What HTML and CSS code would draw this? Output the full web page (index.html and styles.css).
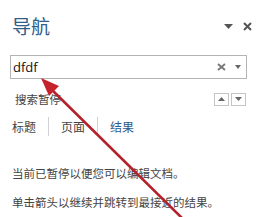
FILE: index.html
```html
<!DOCTYPE html>
<html lang="zh-CN">
<head>
<meta charset="utf-8">
<title>导航</title>
<link rel="stylesheet" href="styles.css">
</head>
<body>
<div class="pane">
  <div class="header">
    <div class="title">导航</div>
    <div class="header-icons">
      <svg class="hdr-drop" width="9" height="5" viewBox="0 0 9 5"><path d="M0 0H9L4.5 5Z" fill="#555"/></svg>
      <svg class="hdr-close" width="9" height="9" viewBox="0 0 9 9"><path d="M1 1L8 8M8 1L1 8" stroke="#555" stroke-width="2"/></svg>
    </div>
  </div>
  <div class="search">
    <span class="query">dfdf</span>
    <svg class="clear" width="9" height="8" viewBox="0 0 9 8"><path d="M1 1L8 7M8 1L1 7" stroke="#777" stroke-width="1.8"/></svg>
    <svg class="drop" width="6" height="4" viewBox="0 0 6 4"><path d="M0 0H6L3 4Z" fill="#666"/></svg>
  </div>
  <div class="status">
    <span class="status-text">搜索暂停</span>
    <div class="navbtns">
      <span class="navbtn"><svg width="7" height="4" viewBox="0 0 7 4"><path d="M0 4H7L3.5 0Z" fill="#666"/></svg></span>
      <span class="navbtn"><svg width="7" height="4" viewBox="0 0 7 4"><path d="M0 0H7L3.5 4Z" fill="#666"/></svg></span>
    </div>
  </div>
  <div class="tabs">
    <span class="tab">标题</span>
    <span class="sep"></span>
    <span class="tab">页面</span>
    <span class="sep"></span>
    <span class="tab active">结果</span>
  </div>
  <div class="msgs">
    <p>当前已暂停以便您可以编辑文档。</p>
    <p>单击箭头以继续并跳转到最接近的结果。</p>
  </div>
</div>
<svg class="arrow" width="262" height="217" viewBox="0 0 262 217">
  <line x1="48" y1="86" x2="184" y2="220" stroke="#b3222a" stroke-width="2.6"/>
  <path d="M41 78L59 86L49 96Z" fill="#c4232b"/>
</svg>
</body>
</html>
```
FILE: styles.css
```css
html, body {
  margin: 0;
  padding: 0;
  background: #fff;
}
body {
  width: 262px;
  height: 217px;
  overflow: hidden;
  position: relative;
  font-family: "Noto Sans CJK SC", "Microsoft YaHei", sans-serif;
  color: #444;
}
.pane {
  padding: 0 15px 0 10px;
}
.header {
  display: flex;
  justify-content: space-between;
  align-items: center;
  height: 28px;
  margin-top: 12px;
}
.title {
  font-size: 19px;
  line-height: 28px;
  color: #2f5d8c;
  padding-left: 2px;
}
.header-icons {
  display: flex;
  align-items: center;
  gap: 10px;
  margin-right: -5px;
}
.search {
  margin-top: 15px;
  height: 22px;
  border: 1px solid #b4b4b4;
  display: flex;
  align-items: center;
  padding: 0 5px 0 2px;
}
.query {
  flex: 1;
  font-family: "Open Sans", "Segoe UI", sans-serif;
  font-size: 13px;
  color: #111;
  line-height: 22px;
}
.clear {
  margin-right: 9px;
}
.status {
  display: flex;
  justify-content: space-between;
  align-items: center;
  margin-top: 13px;
  height: 14px;
}
.status-text {
  font-size: 11.5px;
  line-height: 14px;
  padding-left: 5px;
  color: #444;
}
.navbtns {
  display: flex;
  gap: 2px;
  margin-right: 1px;
}
.navbtn {
  width: 13px;
  height: 11px;
  border: 1px solid #c4c4c4;
  display: flex;
  align-items: center;
  justify-content: center;
}
.tabs {
  display: flex;
  align-items: center;
  margin-top: 11px;
  height: 19px;
  padding-left: 2px;
}
.tab {
  font-size: 12px;
  line-height: 19px;
  color: #444;
}
.tab.active {
  color: #2f5d8c;
}
.sep {
  width: 1px;
  height: 19px;
  background: #d0d0d0;
  margin: 0 12px;
}
.msgs {
  margin-top: 29px;
  padding-left: 2px;
}
.msgs p {
  margin: 0 0 13px;
  font-size: 11.5px;
  line-height: 16px;
  color: #444;
  white-space: nowrap;
}
.arrow {
  position: absolute;
  left: 0;
  top: 0;
  pointer-events: none;
}
```
